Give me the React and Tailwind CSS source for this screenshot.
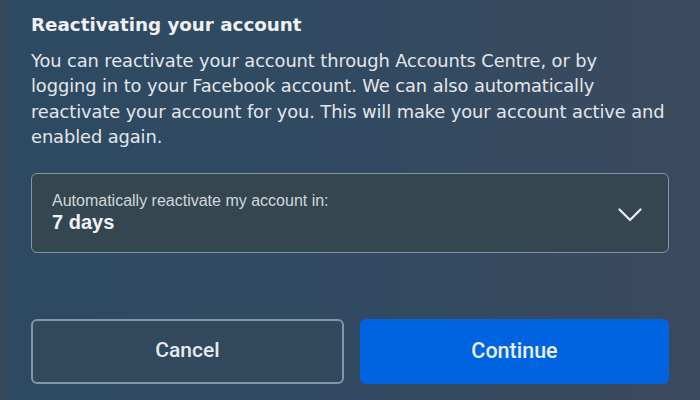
import React, { useState } from "react";

export default function App() {
  const [days] = useState("7 days");

  return (
    <div className="flex h-[400px] w-[700px] overflow-hidden bg-gradient-to-r from-[#2d4a62] via-[#314a61] to-[#3b4a5e] font-['DejaVu_Sans','Noto_Sans',sans-serif] text-[#e4e6eb]">
      <div className="w-[9px] shrink-0 bg-[#34495c]" />
      <div className="flex min-w-0 flex-1 flex-col pl-[22px] pr-[31px]">
        {/* Title + description */}
        <h2 className="mt-[12px] text-[18.3px] font-bold leading-[26px] text-[#eef0f3]">
          Reactivating your account
        </h2>
        <p className="mt-[10px] text-[17.85px] leading-[25.4px] tracking-[-0.1px]">
          You can reactivate your account through Accounts Centre, or by
          <br />
          logging in to your Facebook account. We can also automatically
          <br />
          reactivate your account for you. This will make your account active and
          <br />
          enabled again.
        </p>

        {/* Select */}
        <button
          type="button"
          className="mt-[23px] flex h-[80px] w-full items-center justify-between rounded-[6px] border border-[#8394a6] bg-[#34464f] pl-[20px] pr-[26px] text-left"
        >
          <div className="flex flex-col">
            <span className="font-['Liberation_Sans',sans-serif] text-[16px] leading-[18px] text-[#d3d7dc]">
              Automatically reactivate my account in:
            </span>
            <span className="font-['Liberation_Sans',sans-serif] text-[20px] font-bold leading-[24px] text-[#f0f2f5]">
              {days}
            </span>
          </div>
          <svg width="24" height="14" viewBox="0 0 24 14" fill="none" className="mt-[4px]">
            <polyline points="1.5,1.5 12,12 22.5,1.5" stroke="#eef0f3" strokeWidth="2.2" strokeLinecap="round" strokeLinejoin="round" />
          </svg>
        </button>

        {/* Actions */}
        <div className="mt-[66px] flex gap-[16px]">
          <button
            type="button"
            className="flex h-[65px] flex-1 items-center justify-center rounded-[6px] border-2 border-[#8395a8] bg-[#31485d] font-['Roboto','Liberation_Sans',sans-serif] text-[21px] font-medium text-[#e6e9ed]"
          >
            Cancel
          </button>
          <button
            type="button"
            className="flex h-[65px] flex-1 items-center justify-center rounded-[6px] bg-[#0064e0] font-['Roboto','Liberation_Sans',sans-serif] text-[21.5px] font-medium text-[#e8f0fb]"
          >
            Continue
          </button>
        </div>
      </div>
    </div>
  );
}
